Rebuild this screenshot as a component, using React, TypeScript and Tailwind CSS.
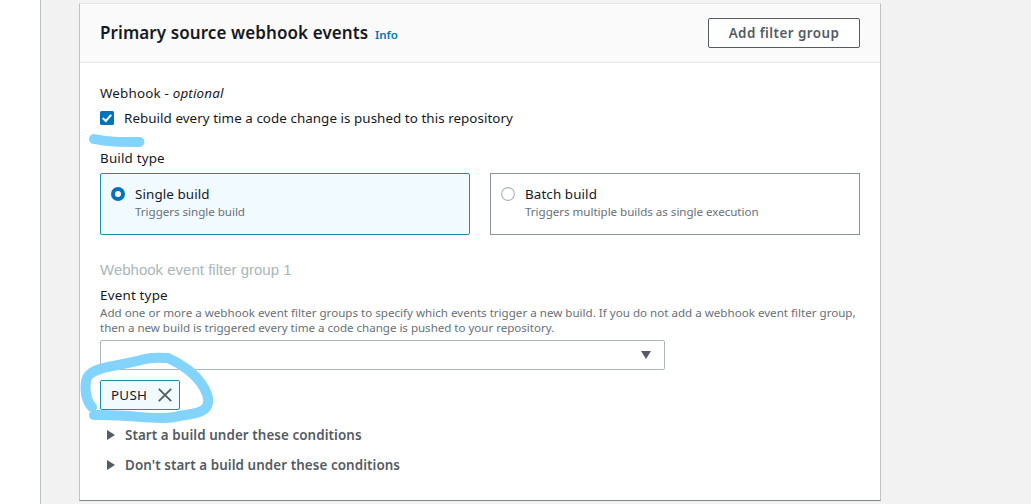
import React from "react";

const LINK = "#0073bb";

function BuildCard({ title, note, selected }: { title: string; note: string; selected?: boolean }) {
  return (
    <label
      className={
        selected
          ? "flex h-[62px] w-[370px] rounded-[2px] border border-[#1f8fa8] bg-[#f1faff] pl-[10px]"
          : "flex h-[62px] w-[370px] border border-[#879596] bg-white pl-[10px]"
      }
    >
      <svg className="mt-[13px] mr-[10px] h-[14px] w-[14px] shrink-0" viewBox="0 0 14 14">
        {selected ? (
          <circle cx="7" cy="7" r="5" fill="white" stroke={LINK} strokeWidth="4" />
        ) : (
          <circle cx="7" cy="7" r="6.4" fill="white" stroke="#aab7b8" strokeWidth="1.1" />
        )}
      </svg>
      <div className="pt-[10px] whitespace-nowrap">
        <div className="text-[13.4px] leading-[20px] tracking-[0.1px] text-[#16191f]">{title}</div>
        <div className="text-[11.6px] leading-[16px] tracking-[-0.03px] text-[#687078]">{note}</div>
      </div>
    </label>
  );
}

function Expander({ children }: { children: React.ReactNode }) {
  return (
    <div className="flex h-[30px] items-center gap-[10px] pl-[7px] text-[13.4px] font-semibold tracking-[0.08px] whitespace-nowrap text-[#545b64]">
      <svg className="h-[10px] w-[8px]" viewBox="0 0 8 10">
        <path d="M0 0L8 5L0 10Z" fill="#545b64" />
      </svg>
      <span>{children}</span>
    </div>
  );
}

export default function App() {
  return (
    <div className="relative flex h-[504px] w-[1031px] overflow-hidden bg-[#f2f2f2] font-['Noto_Sans',sans-serif] text-[#16191f]">
      <aside className="w-[41px] shrink-0 border-r border-[#bcc2c3] bg-white" />
      <main className="mt-[3px] ml-[38px] h-[498px] w-[802px] border-x border-t border-b border-x-[#bcc4c5] border-t-[#e6e8e8] border-b-[#7c8a8b] bg-white">
        <header className="flex h-[59px] items-center justify-between border-b border-[#e6e8e8] bg-[#fafafa] px-[20px]">
          <h1 className="flex items-baseline text-[17px] font-semibold whitespace-nowrap">
            <span className="w-[270px] tracking-[0.09px]">Primary source webhook events</span>
            <a className="ml-[5px] text-[11.5px] text-[#0073bb]">Info</a>
          </h1>
          <button className="h-[30px] w-[152px] rounded-[2px] border border-[#545b64] bg-white text-[13.4px] font-semibold tracking-[0.45px] text-[#545b64]">
            Add filter group
          </button>
        </header>
        <div className="flex flex-col px-[20px] pt-[20px] text-[13.4px] leading-[20px] tracking-[0.05px] whitespace-nowrap">
          <div className="tracking-[0.18px]">
            Webhook - <i>optional</i>
          </div>
          <label className="mt-[5px] flex h-[20px] items-center gap-[10px]">
            <svg className="h-[14px] w-[14px]" viewBox="0 0 14 14">
              <rect width="14" height="14" rx="1.6" fill={LINK} />
              <path d="M2.7 7L5.8 10L11.2 3.8" fill="none" stroke="white" strokeWidth="2" />
            </svg>
            <span>Rebuild every time a code change is pushed to this repository</span>
          </label>
          <div className="mt-[20px] tracking-[0.18px]">Build type</div>
          <div className="mt-[5px] flex gap-[20px]">
            <BuildCard title="Single build" note="Triggers single build" selected />
            <BuildCard title="Batch build" note="Triggers multiple builds as single execution" />
          </div>
          <div className="mt-[25px] font-['Liberation_Sans',sans-serif] text-[15px] tracking-normal text-[#aab7b8]">
            Webhook event filter group 1
          </div>
          <div className="mt-[5px] tracking-[0.2px]">Event type</div>
          <div className="text-[11.6px] leading-[15px] tracking-normal text-[#687078]">
            <div>
              Add one or more a webhook event filter groups to specify which events trigger a new build. If you do not add a webhook event filter group,
            </div>
            <div className="tracking-[-0.03px]">then a new build is triggered every time a code change is pushed to your repository.</div>
          </div>
          <div className="mt-[5px] flex h-[30px] w-[565px] items-center justify-end rounded-[2px] border border-[#aab7b8] pr-[13px]">
            <svg className="h-[8px] w-[10px]" viewBox="0 0 10 8">
              <path d="M0 0H10L5 8Z" fill="#545b64" />
            </svg>
          </div>
          <div className="mt-[10px] mb-[10px] flex h-[30px] w-[80px] items-center rounded-[2px] border border-[#1f8fa8] bg-[#f1faff] pl-[10px]">
            <span className="w-[46px] tracking-[0.25px]">PUSH</span>
            <svg className="h-[16px] w-[16px]" viewBox="0 0 16 16">
              <path d="M1.8 1.8L14.2 14.2M14.2 1.8L1.8 14.2" stroke="#545b64" strokeWidth="1.8" />
            </svg>
          </div>
          <Expander>Start a build under these conditions</Expander>
          <Expander>Don't start a build under these conditions</Expander>
        </div>
      </main>
      <svg className="pointer-events-none absolute inset-0 h-[504px] w-[1031px]" viewBox="0 0 1031 504">
        <g fill="none" stroke="#82d4fc" strokeWidth="10" strokeLinecap="round" strokeLinejoin="round">
          <path d="M94 139C107 142 119 142 139.500 142" />
          <path d="M92 407C84 399 84 380 89 375C98 366 120 366 145 359C155 357 163 358 168 358C181 364 194 373 201 383C207 391 210 400 207 406C203 415 185 414 175 417C154 421 133 414 94 415" />
        </g>
      </svg>
    </div>
  );
}
